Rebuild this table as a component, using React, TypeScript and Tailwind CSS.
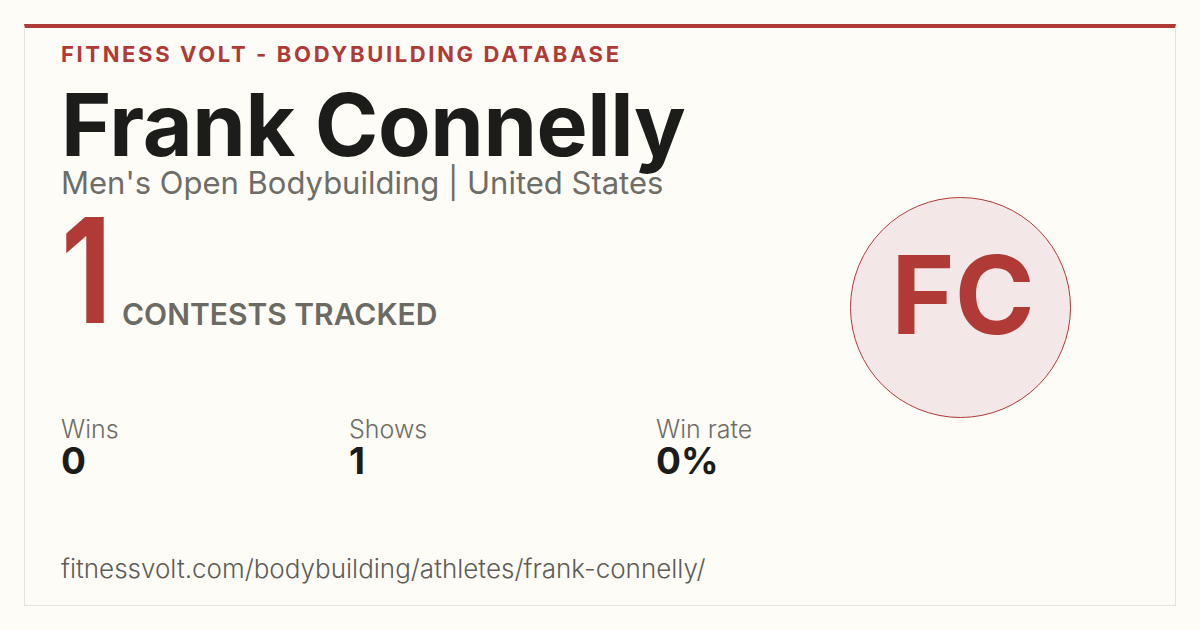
import React from 'react';

const stats = [
  { label: 'Wins', value: '0' },
  { label: 'Shows', value: '1' },
  { label: 'Win rate', value: '0%' },
];

export default function App() {
  return (
    <div className="w-[1200px] h-[630px] bg-[#fdfcf7] p-6 font-['Inter',sans-serif]">
      <div className="h-full border border-[#e6e3dc] border-t-4 border-t-[#b03a36] flex">
        {/* Left column */}
        <div className="flex-1 flex flex-col pl-9 pt-[14px] pb-[21px]">
          <div className="text-[22px] leading-[24px] font-bold tracking-[0.12em] text-[#b03a36]">
            FITNESS VOLT - BODYBUILDING DATABASE
          </div>
          <h1 className="mt-[14px] text-[86px] leading-[90px] font-bold tracking-[-0.005em] text-[#1c1c1a]">
            Frank Connelly
          </h1>
          <div className="-mt-[5px] text-[31px] leading-[36px] text-[#6e6d67]">
            Men's Open Bodybuilding | United States
          </div>
          <div className="mt-[10px] flex items-end gap-[16px]">
            <span className="inline-block w-[45px] origin-left scale-x-[0.8] text-[146px] leading-[118px] font-bold text-[#b03a36]">
              1
            </span>
            <span className="text-[30px] leading-[30px] font-semibold tracking-normal text-[#6b6a63]">
              CONTESTS TRACKED
            </span>
          </div>
          <div className="mt-[86px] grid grid-cols-[288px_307px_auto]">
            {stats.map(s => (
              <div key={s.label} className="flex flex-col">
                <span className="text-[25px] leading-[28px] font-light text-[#6e6d67]">{s.label}</span>
                <span className="text-[37px] leading-[36px] font-bold text-[#1c1c1a]">{s.value}</span>
              </div>
            ))}
          </div>
          <div className="mt-auto text-[26px] leading-[30px] font-light text-[#5e5d57]">
            fitnessvolt.com/bodybuilding/athletes/frank-connelly/
          </div>
        </div>

        {/* Monogram */}
        <div className="w-[360px] flex items-start justify-center pt-[169px] pr-[70px]">
          <div className="w-[221px] h-[221px] shrink-0 rounded-full border border-[#b03a36] bg-[#f3e8e7] flex items-center justify-center">
            <span className="-mt-[26px] ml-[6px] text-[108px] leading-none font-bold text-[#b03a36]">FC</span>
          </div>
        </div>
      </div>
    </div>
  );
}
